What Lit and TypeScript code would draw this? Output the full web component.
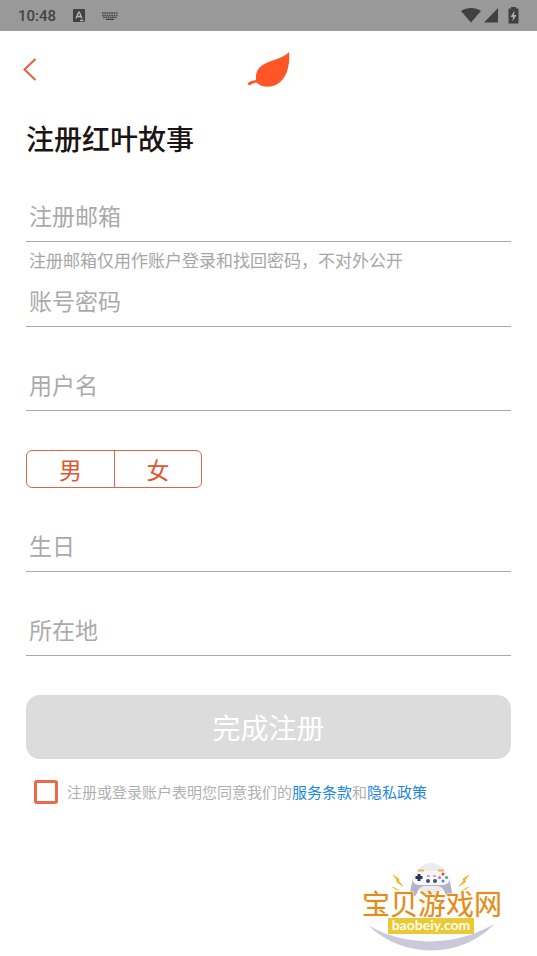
import { LitElement, html, css, svg } from "lit";
import { customElement, property, state } from "lit/decorators.js";

@customElement("status-bar")
export class StatusBar extends LitElement {
  static styles = css`
    :host {
      display: flex;
      align-items: center;
      justify-content: space-between;
      height: 31px;
      padding: 0 18px;
      background: #999;
      color: #444;
      font: 500 15px/20px Roboto, sans-serif;
    }
    .group {
      display: flex;
      align-items: center;
    }
    .left {
      gap: 16px;
    }
    svg {
      display: block;
      fill: #404040;
    }
  `;

  render() {
    return html`
      <div class="group left">
        <span>10:48</span>
        <svg width="14" height="14" viewBox="0 0 14 14" aria-hidden="true">
          <rect x="1" y="0" width="12" height="13" rx="1" />
          <path d="M4 9.500 6.600 3.200h.8L10 9.500M5 7.500h4M8 11.500h3.500" fill="none" stroke="#b5b5b5" stroke-width="1.3" />
        </svg>
        <svg width="16" height="10" viewBox="0 0 16 10" aria-hidden="true">
          <path
            d="M0 2h16M0 4.500h16M1 6.500h14"
            fill="none"
            stroke="#4a4a4a"
            stroke-width="1.600"
            stroke-dasharray="1.700 .6"
          />
          <path d="M4 7.800h8v1.200H4z" />
        </svg>
      </div>
      <svg width="58" height="18" viewBox="0 0 58 18" aria-hidden="true">
        <path d="M0 4C5.500 0 14.500 0 20 4L10 15.500z" />
        <path d="M37 1v14.500H23z" />
        <path d="M50 1.500V0h5v1.500h2.500v15h-10v-15z" />
        <path d="M53.500 3.500l-4 6.500h2.500l-.500 4.500 4-6.500h-2.500z" fill="#b0b0b0" />
      </svg>
    `;
  }
}

@customElement("form-field")
export class FormField extends LitElement {
  static styles = css`
    :host {
      display: block;
    }
    .input {
      display: block;
      box-sizing: border-box;
      width: 100%;
      height: 50px;
      margin: 0;
      padding: 0 3px 4px;
      border: 0;
      border-bottom: 1px solid #aaa;
      border-radius: 0;
      outline: none;
      background: transparent;
      color: #333;
      font: 23px/34px "Noto Sans CJK SC", sans-serif;
    }
    .input::placeholder {
      color: #aaa;
      opacity: 1;
    }
    .input:focus {
      border-color: #e25c3d;
    }
    .hint {
      margin: 0;
      padding: 5px 3px;
      color: #a6a6a6;
      font: 17px/25px "Noto Sans CJK SC", sans-serif;
    }
  `;

  @property() label = "";
  @property() type = "text";
  @property() hint = "";

  render() {
    return html`
      <input class="input" type=${this.type} placeholder=${this.label} aria-label=${this.label} />
      ${this.hint ? html`<p class="hint">${this.hint}</p>` : null}
    `;
  }
}

@customElement("site-badge")
export class SiteBadge extends LitElement {
  static styles = css`
    :host {
      display: block;
      width: 142px;
    }
    svg {
      display: block;
    }
    .name {
      font: 400 28px "Noto Sans CJK SC", sans-serif;
      fill: #e08a28;
      stroke: #fff3c4;
      stroke-width: 1px;
      paint-order: stroke;
    }
    .domain {
      font: 700 14px Lato, sans-serif;
      fill: #fffef0;
    }
  `;

  render() {
    const bolt = svg`<path d="M0 0 6 4 5.500 6 10 11 3.500 7 4 5z" fill="#f0b62c" stroke="#f0b62c" stroke-width=".8" />`;
    return html`
      <svg width="142" height="90" viewBox="0 0 142 90" role="img" aria-label="宝贝游戏网 baobeiy.com">
        <circle cx="70" cy="16" r="16" fill="#ececef" />
        <path
          d="M52 14C54 7 60 8 64 10h12c4-2 10-3 12 4l3 15c0 6-5 6-7 1-2-5-4-7-8-7H64c-4 0-6 2-8 7-2 5-7 5-7-1z"
          fill="#b3b4c6"
        />
        <rect x="51" y="8" width="38" height="14" rx="7" fill="#f6f6fa" />
        <path d="M57 7.500h6M77 7.500h6" stroke="#e8b34a" stroke-width="2" />
        <path d="M58 11v7M54.500 14.500h7" stroke="#27384f" stroke-width="3" />
        <circle cx="67" cy="18" r="2" fill="#34596c" />
        <circle cx="74" cy="18" r="2" fill="#34596c" />
        <path d="M66 13h3M72 13h3" stroke="#d84c5a" stroke-width="1" />
        <circle cx="82" cy="11" r="1.500" fill="#e0484e" />
        <circle cx="82" cy="18" r="1.500" fill="#4a8ad6" />
        <circle cx="78.500" cy="14.500" r="1.500" fill="#d46ea4" />
        <circle cx="85.500" cy="14.500" r="1.500" fill="#46a87c" />
        <g transform="translate(32 12)">${bolt}</g>
        <g transform="translate(31 24) scale(.7 .3)">${bolt}</g>
        <g transform="translate(108 12) scale(-1 1)">${bolt}</g>
        <g transform="translate(108 24) scale(-.7 .3)">${bolt}</g>
        <path d="M7 62C43 84 95 84 133 61 101 96 41 96 7 62z" fill="#c8cada" />
        <text class="name" x="1" y="52">宝贝游戏网</text>
        <rect x="27" y="55" width="86" height="16" fill="#e9c935" />
        <text class="domain" x="70" y="67" text-anchor="middle">baobeiy.com</text>
      </svg>
    `;
  }
}

@customElement("app-root")
export class AppRoot extends LitElement {
  static styles = css`
    :host {
      display: flex;
      flex-direction: column;
      box-sizing: border-box;
      min-height: 100vh;
      background: #fff;
      font-family: "Noto Sans CJK SC", sans-serif;
    }
    .header {
      display: grid;
      grid-template-columns: 1fr auto 1fr;
      align-items: center;
      height: 77px;
      padding: 0 16px;
    }
    .back {
      justify-self: start;
      padding: 4px 6px;
      border: 0;
      background: none;
      cursor: pointer;
    }
    .header svg {
      display: block;
    }
    .content {
      padding: 0 26px;
    }
    .title {
      margin: 10px 0 34px;
      color: #1c1414;
      font-size: 28px;
      line-height: 40px;
      font-weight: 500;
    }
    .fields {
      display: flex;
      flex-direction: column;
      gap: 34px;
    }
    .pair {
      display: flex;
      flex-direction: column;
    }
    .gender {
      display: grid;
      grid-template-columns: 1fr 1fr;
      box-sizing: border-box;
      width: 176px;
      height: 38px;
      margin: 5px 0 0;
      padding: 0;
      border: 1px solid #db654a;
      border-radius: 6px;
      overflow: hidden;
    }
    .option {
      display: flex;
      align-items: center;
      justify-content: center;
      color: #e2562f;
      font-size: 23px;
      line-height: 34px;
      cursor: pointer;
    }
    .option + .option {
      border-left: 1px solid #db654a;
    }
    .option:has(.radio:checked) {
      background: #e2562f;
      color: #fff;
    }
    .radio {
      position: absolute;
      opacity: 0;
      pointer-events: none;
    }
    .submit {
      display: block;
      width: 100%;
      height: 64px;
      margin: 39px 0 21px;
      padding: 0;
      border: 0;
      border-radius: 14px;
      background: #dcdcdc;
      color: #fff;
      font: 28px/40px "Noto Sans CJK SC", sans-serif;
    }
    .consent {
      display: flex;
      align-items: center;
      gap: 9px;
      padding-left: 8px;
      color: #b0b0b0;
      font-size: 15px;
      line-height: 24px;
    }
    .check {
      flex: none;
      appearance: none;
      box-sizing: border-box;
      width: 24px;
      height: 24px;
      margin: 0;
      border: 3px solid #e8694b;
      border-radius: 3px;
      background: #fff;
    }
    .check:checked {
      background: #e25c3d;
    }
    .link {
      color: #2188e0;
      text-decoration: none;
    }
    .badge {
      align-self: flex-end;
      margin: auto 34px 3px 0;
    }
  `;

  @state() private gender = "";

  private renderOption(value: string) {
    return html`
      <label class="option">
        <input
          class="radio"
          type="radio"
          name="gender"
          .checked=${this.gender === value}
          @change=${() => (this.gender = value)}
        />${value}
      </label>
    `;
  }

  render() {
    return html`
      <status-bar></status-bar>
      <header class="header">
        <button class="back" type="button" aria-label="返回">
          <svg width="16" height="24" viewBox="0 0 16 24" fill="none" stroke="#e2613f" stroke-width="2">
            <path d="M13.500 1 2.500 11.500l11 10.500" />
          </svg>
        </button>
        <svg width="44" height="36" viewBox="0 0 44 36" aria-hidden="true">
          <path
            d="M42 0C36 7.500 20 8 12.500 15.500c-3 3.500-4 8-3.500 12.500-3 .5-6 1-8.500 3.500l1.500 2c2.500-1 4.500-2.500 7.500-3C13 34.500 20 35.500 26 34 38 30.500 43.500 16.500 42 0z"
            fill="#ff5527"
          />
        </svg>
      </header>
      <main class="content">
        <h1 class="title">注册红叶故事</h1>
        <form @submit=${(e: Event) => e.preventDefault()}>
          <div class="fields">
            <div class="pair">
              <form-field label="注册邮箱" type="email" hint="注册邮箱仅用作账户登录和找回密码，不对外公开"></form-field>
              <form-field label="账号密码" type="password"></form-field>
            </div>
            <form-field label="用户名"></form-field>
            <fieldset class="gender" aria-label="性别">${this.renderOption("男")}${this.renderOption("女")}</fieldset>
            <form-field label="生日"></form-field>
            <form-field label="所在地"></form-field>
          </div>
          <button class="submit" type="submit" disabled>完成注册</button>
          <div class="consent">
            <input class="check" id="agree" type="checkbox" />
            <span>
              <label for="agree">注册或登录账户表明您同意我们的</label><a class="link" href="#terms">服务条款</a>和<a
                class="link"
                href="#privacy"
                >隐私政策</a
              >
            </span>
          </div>
        </form>
      </main>
      <site-badge class="badge"></site-badge>
    `;
  }
}
